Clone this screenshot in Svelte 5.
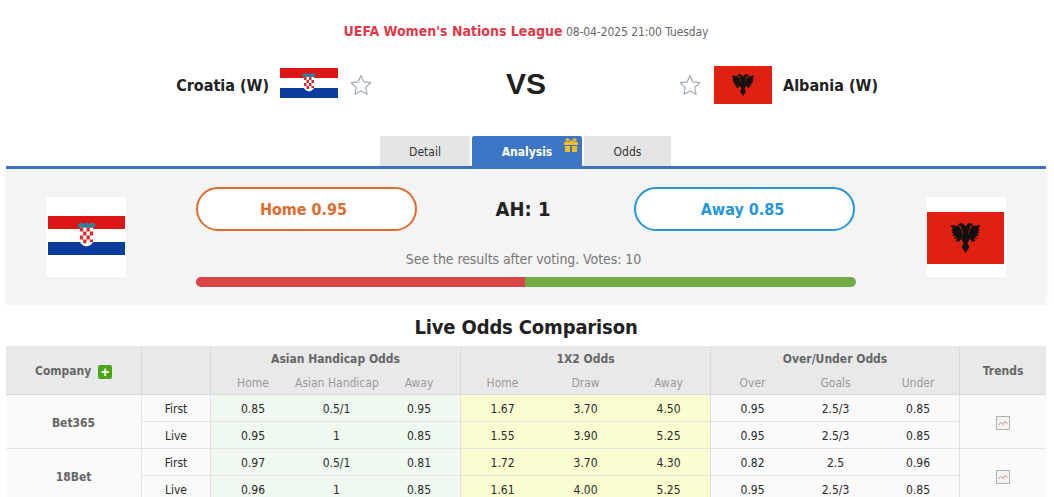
<script>
  let companies = [
    {
      name: 'Bet365',
      rows: [
        { type: 'First', ah: ['0.85', '0.5/1', '0.95'], x12: ['1.67', '3.70', '4.50'], ou: ['0.95', '2.5/3', '0.85'] },
        { type: 'Live', ah: ['0.95', '1', '0.85'], x12: ['1.55', '3.90', '5.25'], ou: ['0.95', '2.5/3', '0.85'] }
      ]
    },
    {
      name: '18Bet',
      rows: [
        { type: 'First', ah: ['0.97', '0.5/1', '0.81'], x12: ['1.72', '3.70', '4.30'], ou: ['0.82', '2.5', '0.96'] },
        { type: 'Live', ah: ['0.96', '1', '0.85'], x12: ['1.61', '4.00', '5.25'], ou: ['0.95', '2.5/3', '0.85'] }
      ]
    }
  ];
  let subHeads = ['Home', 'Asian Handicap', 'Away', 'Home', 'Draw', 'Away', 'Over', 'Goals', 'Under'];
  let homeShare = 49.8;
</script>

{#snippet star()}
  <svg class="star" viewBox="0 0 22 22" width="22" height="22">
    <path d="M11 1.5l2.9 6.4 6.8.8-5 4.7 1.3 6.900L11 17l-6 3.300 1.300-6.900-5-4.700 6.800-.8z" fill="#fff" stroke="#a3aab4" stroke-width="1.2" stroke-linejoin="round"/>
  </svg>
{/snippet}

{#snippet croatia(w, h)}
  <svg class="flag" viewBox="0 0 58 30" width={w} height={h} preserveAspectRatio="none">
    <rect width="58" height="10" fill="#db1515"/>
    <rect y="10" width="58" height="10" fill="#fff"/>
    <rect y="20" width="58" height="10" fill="#0a3c9e"/>
    <path d="M22 6.500l3-1.500 2 1 2-1 2 1 2-1 3 1.500-1 2.500H23z" fill="#2f7f9a"/>
    <path d="M24 9h10v10q0 3-5 4.500q-5-1.500-5-4.500z" fill="#fff"/>
    <path d="M24 9h2.500v3H24zM29 9h2.500v3H29zM26.500 12H29v3h-2.500zM31.500 12H34v3h-2.500zM24 15h2.500v3H24zM29 15h2.500v3H29zM26.500 18H29v3h-2.500zM31.500 18H34v2h-2.500z" fill="#dc2a2a"/>
  </svg>
{/snippet}

{#snippet albania(w, h)}
  <svg class="flag" viewBox="0 0 58 38" width={w} height={h} preserveAspectRatio="none">
    <rect width="58" height="38" fill="#e02010"/>
    <g fill="#111">
      <path d="M18.500 9.500l5.500 1 2 2.500 1 5-3 4-2.500-1 1.500-2-3 .5 1.700-2h-2.700l1.500-2h-2l1.200-2h-1.500l1.300-2-1.500-.5z"/>
      <path d="M39.500 9.500l-5.500 1-2 2.500-1 5 3 4 2.500-1-1.500-2 3 .5-1.700-2h2.700l-1.500-2h2l-1.200-2h1.500l-1.300-2 1.500-.5z"/>
      <path d="M27 14h4l1 6-1.500 3 1.500 2.500-2 3-1 1.500-1-1.500-2-3 1.500-2.500-1.500-3z"/>
      <path d="M29 10.500L26.500 8l-2.500.5-1 1.500h2l1 2 1 3h4l1-3 1-2h2l-1-1.500L31.500 8z"/>
    </g>
  </svg>
{/snippet}

<div class="page">
  <header class="match">
    <p class="league"><b>UEFA Women's Nations League</b> <span>08-04-2025 21:00 Tuesday</span></p>
    <div class="teams">
      <div class="team home">
        <strong>Croatia (W)</strong>
        <div class="raised">{@render croatia(58, 30)}</div>
        {@render star()}
      </div>
      <div class="vs">VS</div>
      <div class="team away">
        {@render star()}
        {@render albania(58, 38)}
        <strong>Albania (W)</strong>
      </div>
    </div>
  </header>

  <nav class="tabs">
    <button class="tab detail">Detail</button>
    <button class="tab analysis active">
      Analysis
      <svg class="gift" viewBox="0 0 16 14" width="16" height="14">
        <path d="M1 4h14v3H1zM2 8h5v6H2zM9 8h5v6H9z" fill="#f6bb1c"/>
        <path d="M8 4L4.500.8 3 2l2 2M8 4l3.500-3.200L13 2l-2 2" fill="none" stroke="#f6bb1c" stroke-width="1.500"/>
      </svg>
    </button>
    <button class="tab odds">Odds</button>
  </nav>

  <section class="vote">
    <div class="flag-box box-home">{@render croatia(77, 39)}</div>
    <div class="vote-main">
      <div class="choices">
        <button class="pick pick-home">Home 0.95</button>
        <div class="handicap">AH: 1</div>
        <button class="pick pick-away">Away 0.85</button>
      </div>
      <p class="note">See the results after voting. Votes: 10</p>
      <div class="bar">
        <div class="bar-home" style="width: {homeShare}%"></div>
        <div class="bar-away"></div>
      </div>
    </div>
    <div class="flag-box box-away">{@render albania(77, 52)}</div>
  </section>

  <h2>Live Odds Comparison</h2>

  <table>
    <colgroup>
      <col style="width: 135px" />
      <col style="width: 69px" />
      <col style="width: 85px" /><col style="width: 83px" /><col style="width: 82px" />
      <col style="width: 84px" /><col style="width: 83px" /><col style="width: 83px" />
      <col style="width: 84px" /><col style="width: 83px" /><col style="width: 82px" />
      <col style="width: 87px" />
    </colgroup>
    <thead>
      <tr class="head-top">
        <th rowspan="2" class="company-head">Company <span class="plus">+</span></th>
        <th rowspan="2"></th>
        <th colspan="3">Asian Handicap Odds</th>
        <th colspan="3">1X2 Odds</th>
        <th colspan="3">Over/Under Odds</th>
        <th rowspan="2">Trends</th>
      </tr>
      <tr class="head-sub">
        {#each subHeads as label, i}
          <th class:group-start={i % 3 === 0}>{label}</th>
        {/each}
      </tr>
    </thead>
    <tbody>
      {#each companies as company}
        {#each company.rows as row, r}
          <tr>
            {#if r === 0}
              <td rowspan="2" class="company">{company.name}</td>
            {/if}
            <td class="type">{row.type}</td>
            {#each row.ah as v, i}<td class="ah" class:group-start={i === 0}>{v}</td>{/each}
            {#each row.x12 as v, i}<td class="x12" class:group-start={i === 0}>{v}</td>{/each}
            {#each row.ou as v, i}<td class="ou" class:group-start={i === 0}>{v}</td>{/each}
            {#if r === 0}
              <td rowspan="2" class="trend">
                <svg viewBox="0 0 14 14" width="14" height="14">
                  <rect x=".5" y=".5" width="13" height="13" fill="#f3f3f3" stroke="#b5b0ab"/>
                  <path d="M2.500 9l2.500-2.500 2 2 2-3 2.500 2" fill="none" stroke="#c98f73"/>
                </svg>
              </td>
            {/if}
          </tr>
        {/each}
      {/each}
    </tbody>
  </table>
</div>

<style>
  :global(body) {
    margin: 0;
    background: #fff;
    overflow: hidden;
    font-family: "DejaVu Sans", Verdana, sans-serif;
    font-stretch: condensed;
    font-size: 12px;
    color: #222;
  }

  .page {
    width: 1040px;
    margin: 0 auto 0 6px;
  }

  .match {
    height: 136px;
    padding-top: 21px;
    box-sizing: border-box;
  }

  .league {
    margin: 0;
    text-align: center;
    line-height: 20px;
    color: #666;
    font-size: 12px;
  }

  .league span {
    letter-spacing: -0.08px;
  }

  .league b {
    color: #e0394a;
    font-size: 14px;
  }

  .teams {
    display: grid;
    grid-template-columns: 1fr 1fr;
    position: relative;
    height: 38px;
    margin-top: 24px;
  }

  .team {
    display: flex;
    align-items: center;
    gap: 11px;
  }

  .team strong {
    font-size: 16px;
    color: #222;
  }

  .team.home {
    justify-content: flex-end;
    padding-right: 154px;
  }

  .team.home .star {
    margin-left: 1px;
  }

  .team.away {
    padding-left: 153px;
  }

  .team.away .star {
    margin-right: 2px;
  }

  .raised {
    margin-bottom: 4px;
  }

  .vs {
    position: absolute;
    left: 0;
    right: 0;
    top: -1px;
    text-align: center;
    font: bold 30px/38px "Liberation Sans", Arial, sans-serif;
    color: #222;
  }

  .tabs {
    display: flex;
    justify-content: center;
    gap: 2px;
    height: 30px;
    border-bottom: 3px solid #3d76c4;
    padding-right: 1px;
  }

  .tab {
    border: 0;
    padding: 1px 0 0;
    font: inherit;
    background: #e5e5e5;
    color: #333;
    height: 30px;
    position: relative;
  }

  .detail { width: 90px; }
  .odds { width: 87px; }

  .analysis {
    width: 110px;
    background: #3d76c4;
    color: #fff;
    font-weight: bold;
    height: 33px;
    padding: 0 0 2px;
    border-radius: 2px 2px 0 0;
  }

  .gift {
    position: absolute;
    top: 2px;
    right: 3px;
  }

  .vote {
    display: flex;
    align-items: flex-start;
    height: 136px;
    padding: 28px 40px 0;
    box-sizing: border-box;
    background: #f4f4f4;
    box-shadow: 0 -2px 6px rgba(0, 0, 0, 0.05);
  }

  .flag-box {
    width: 80px;
    height: 80px;
    flex: none;
    box-sizing: border-box;
    background: #fff;
    border-radius: 2px;
    display: flex;
    align-items: center;
  }

  .box-home { padding: 0 0 3px 2px; }
  .box-away { padding: 2px 0 0 1px; }

  .vote-main {
    flex: 1;
    padding: 0 70px;
    margin-top: -10px;
  }

  .choices {
    display: flex;
    justify-content: space-between;
    align-items: center;
  }

  .pick {
    width: 221px;
    height: 44px;
    border-radius: 22px;
    background: #fff;
    font: inherit;
    font-size: 16px;
    font-weight: bold;
    box-sizing: border-box;
  }

  .pick-home {
    border: 2px solid #e06b2f;
    color: #e06b2f;
    padding: 0 6px 0 0;
  }

  .pick-away {
    border: 2px solid #2596de;
    color: #2596de;
    padding: 0 4px 0 0;
    margin-right: 1px;
  }

  .handicap {
    font-size: 20px;
    font-weight: bold;
    margin-right: 5px;
  }

  .note {
    margin: 18px 0 8px;
    padding-right: 5px;
    text-align: center;
    font-size: 14px;
    line-height: 20px;
    letter-spacing: -0.08px;
    color: #777;
  }

  .bar {
    display: flex;
    height: 10px;
    border-radius: 5px;
    overflow: hidden;
  }

  .bar-home { background: #d94545; }
  .bar-away { flex: 1; background: #72ab48; }

  h2 {
    margin: 0;
    height: 41px;
    line-height: 44px;
    text-align: center;
    font-size: 20px;
    letter-spacing: -0.15px;
    color: #222;
  }

  table {
    width: 1040px;
    table-layout: fixed;
    border-collapse: separate;
    border-spacing: 0;
    font-size: 12px;
  }

  th {
    background: #e9e9e9;
    color: #666;
    font-weight: bold;
    border-left: 1px solid #d9d9d9;
    padding: 2px 0 0;
    white-space: nowrap;
    box-sizing: border-box;
  }

  th:first-child { border-left: 0; }

  .head-top th { height: 24px; }

  .head-sub th {
    height: 25px;
    border-left: 0;
    border-bottom: 1px solid #d9d9d9;
    font-weight: normal;
    color: #999;
  }

  .head-top th[rowspan] { border-bottom: 1px solid #d9d9d9; }
  .head-sub th.group-start { border-left: 1px solid #d9d9d9; }

  .company-head { text-align: center; }

  .plus {
    display: inline-block;
    width: 14px;
    height: 14px;
    margin-left: 3px;
    background: #4aa517;
    border-radius: 2px;
    color: #fff;
    font: bold 14px/14px "Liberation Sans", Arial, sans-serif;
    vertical-align: -2px;
  }

  td {
    height: 27px;
    box-sizing: border-box;
    padding: 2px 0 0;
    text-align: center;
    color: #2a2a2a;
    border-bottom: 1px solid #e4e4e4;
    background: #fafafa;
  }

  td.group-start { border-left: 1px solid #e0e0e0; }

  .company {
    font-weight: bold;
    color: #666;
  }

  .type { border-left: 1px solid #e4e4e4; }
  .ah { background: #eff9ef; }
  .x12 { background: #fdfdd2; }
  .trend { border-left: 1px solid #e0e0e0; }
  .trend svg { display: block; margin: 0 auto; }
  .flag { display: block; }
  .star { flex: none; }
</style>
